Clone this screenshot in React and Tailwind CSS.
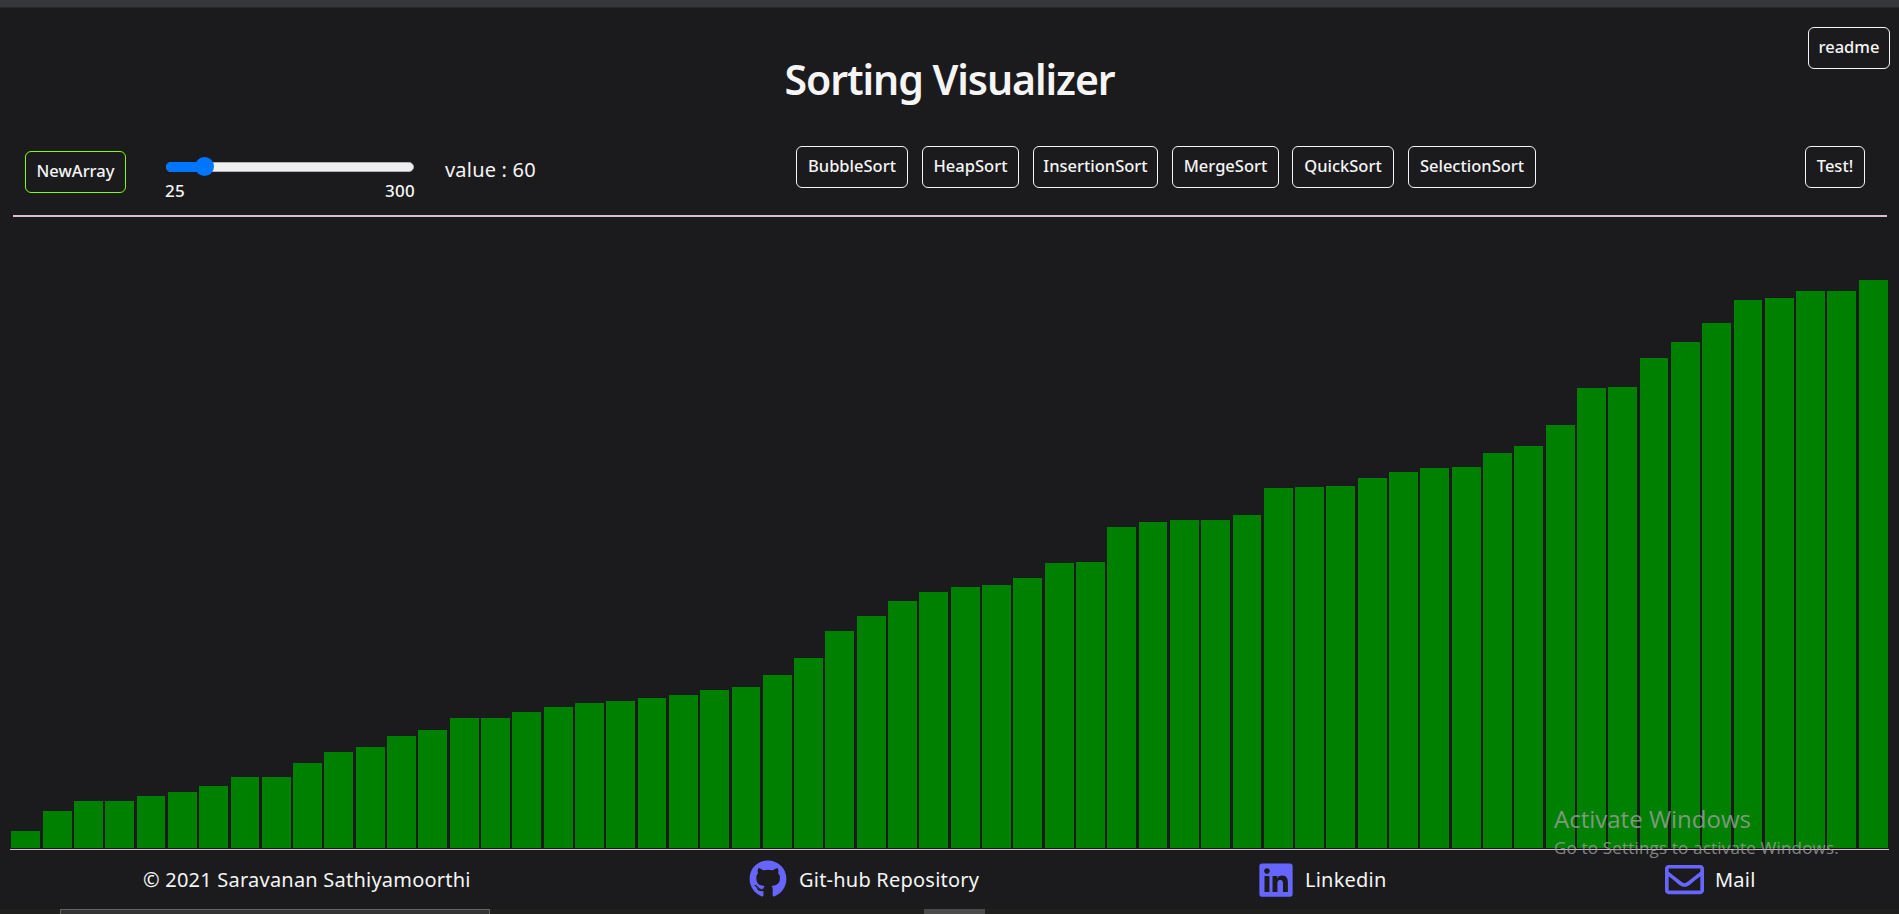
import React from "react";
import { FaGithub, FaLinkedin, FaRegEnvelope } from "react-icons/fa";

const heights = [
  17, 37, 47, 47, 52, 56, 62, 71, 71, 85, 96, 101, 112, 118, 130, 130, 136, 141, 145, 147,
  150, 153, 158, 161, 173, 190, 217, 232, 247, 256, 261, 263, 270, 285, 286, 321, 326, 328, 328, 333,
  360, 361, 362, 370, 376, 380, 381, 395, 402, 423, 460, 461, 490, 506, 525, 548, 550, 557, 557, 568,
];

const algorithms = [
  { name: "BubbleSort", size: "w-[112px] mr-[14px]" },
  { name: "HeapSort", size: "w-[97px] mr-[14px]" },
  { name: "InsertionSort", size: "w-[125px] mr-[14px]" },
  { name: "MergeSort", size: "w-[107px] mr-[13px]" },
  { name: "QuickSort", size: "w-[102px] mr-[14px]" },
  { name: "SelectionSort", size: "w-[128px]" },
];

function Button({ children, className }) {
  return (
    <button
      className={`h-[42px] shrink-0 rounded-[6px] border pb-px text-center text-[16.5px] leading-none font-medium whitespace-nowrap ${className}`}
    >
      {children}
    </button>
  );
}

function SizeSlider() {
  return (
    <div className="mt-[11px] ml-[40px] w-[248px] shrink-0">
      <div className="relative h-[10px] w-full rounded-full border border-[#b2b2b2] bg-[#efefef]">
        <div className="absolute -top-px -left-px h-[10px] w-[38px] rounded-l-full bg-[#0075ff]" />
        <div className="absolute -top-[6px] left-[28px] size-[19px] rounded-full bg-[#0075ff]" />
      </div>
      <div className="-mx-px mt-[7px] flex justify-between text-[17px] leading-[24px] font-medium tracking-[0.3px]">
        <span>25</span>
        <span>300</span>
      </div>
    </div>
  );
}

export default function App() {
  return (
    <div className="relative flex h-[914px] w-[1899px] flex-col overflow-hidden bg-[#1b1b1d] font-['Noto_Sans',sans-serif] text-[#f5f5f5]">
      <div className="h-[8px] shrink-0 border-b border-[#29292b] bg-[#35363a]" />

      <header className="relative h-[138px] shrink-0">
        <h1 className="pt-[43px] text-center text-[41px] leading-[56px] font-semibold tracking-[-1.05px]">
          Sorting Visualizer
        </h1>
        <Button className="absolute top-[19px] right-[9px] w-[82px] border-[#f5f5f5]">readme</Button>
      </header>

      <div className="flex h-[69px] shrink-0 items-start pl-[25px]">
        <Button className="mt-[5px] w-[101px] border-[#7fff00]">NewArray</Button>
        <div className="pt-[5px]">
          <SizeSlider />
        </div>
        <span className="mt-[10px] ml-[31px] w-[120px] text-[20px] leading-[28px] tracking-[0.2px]">value : 60</span>
        <div className="ml-[231px] flex">
          {algorithms.map((a) => (
            <Button key={a.name} className={`border-[#f5f5f5] ${a.size}`}>
              {a.name}
            </Button>
          ))}
        </div>
        <Button className="mr-[34px] ml-auto w-[60px] border-[#f5f5f5]">Test!</Button>
      </div>

      <hr className="mx-[13px] mr-[12px] h-[2px] shrink-0 border-0 bg-[#d8bfd8]" />

      <main className="mx-[10px] flex h-[633px] shrink-0 items-end border-b border-[#d8bfd8] pb-px">
        {heights.map((h, i) => (
          <div key={i} className="mr-[1.1px] ml-[1.32px] flex-1 bg-[#008000]" style={{ height: h }} />
        ))}
      </main>

      <footer className="flex h-[59px] shrink-0 items-center text-[20px] leading-[28px] tracking-[0.22px]">
        <span className="ml-[143px] w-[606px]">© 2021 Saravanan Sathiyamoorthi</span>
        <a className="flex w-[510px] items-center gap-[12px]">
          <FaGithub className="mb-px size-[38px] text-[#6666ff]" />
          Git-hub Repository
        </a>
        <a className="flex w-[406px] items-center gap-[12px]">
          <FaLinkedin className="h-[38px] w-[34px] text-[#6666ff]" />
          Linkedin
        </a>
        <a className="flex items-center gap-[11px]">
          <FaRegEnvelope className="size-[39px] text-[#6666ff]" />
          Mail
        </a>
      </footer>

      <div className="flex h-[5px] shrink-0 bg-[#1f1f1e]">
        <div className="ml-[60px] w-[430px] border border-b-0 border-[#646464] bg-[#333333]" />
        <div className="ml-[434px] w-[61px] bg-[#4b4b4b]" />
      </div>

      <div className="absolute top-[802px] left-[1554px] font-['Open_Sans',sans-serif] whitespace-nowrap text-[#a0a0a0]/80">
        <div className="text-[24px] leading-[34px]">Activate Windows</div>
        <div className="text-[17px] leading-[24px] tracking-[0.18px]">Go to Settings to activate Windows.</div>
      </div>
    </div>
  );
}
